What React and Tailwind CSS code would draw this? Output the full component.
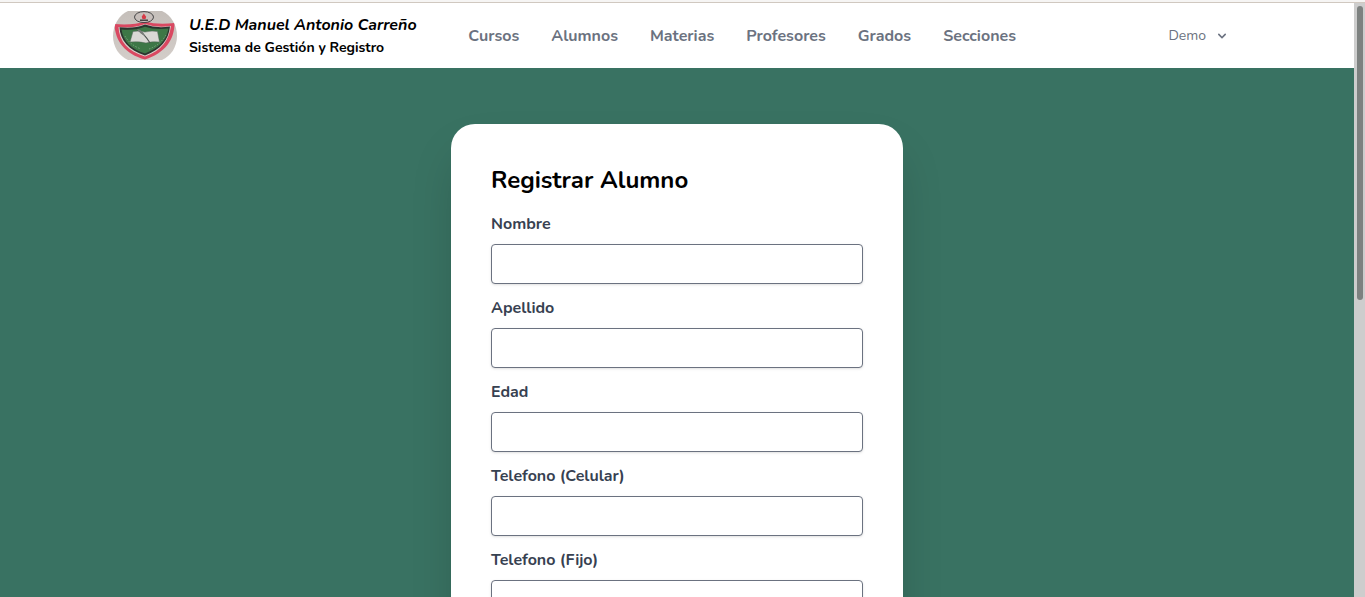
const links = ['Cursos', 'Alumnos', 'Materias', 'Profesores', 'Grados', 'Secciones'];

const fields = ['Nombre', 'Apellido', 'Edad', 'Telefono (Celular)', 'Telefono (Fijo)'];

function Crest() {
  return (
    <svg className="h-[49px] w-16 shrink-0" viewBox="0 0 64 49">
      <defs>
        <clipPath id="crest-clip">
          <path d="M15 0H49C58 4 64 14 64 25C64 36 58 45 49 49H15C6 45 0 36 0 25C0 14 6 4 15 0Z" />
        </clipPath>
        <linearGradient id="crest-paper" x1="0" y1="0" x2="0" y2="1">
          <stop offset="0" stopColor="#c5bfba" />
          <stop offset="1" stopColor="#d3cdc9" />
        </linearGradient>
      </defs>
      <g clipPath="url(#crest-clip)">
        <rect width="64" height="49" fill="url(#crest-paper)" />
        <path d="M1.500 13Q20 14.500 32 10.500Q44 14 61.500 12C61.500 29 52 42 32 48.500C12 43 2 30 1.500 13Z" fill="#d94861" />
        <path d="M5.500 16Q21 17.500 32 13Q43 17 58 15C56 29 49 39.500 32 45.500C15 40.500 6 30 5.500 16Z" fill="#d6cfc9" />
        <path d="M6.500 16.300Q21 18 32 13.500Q43 17.500 57 15.500C55.500 29 48 38.500 32 44.500C16 39.500 7 29 6.500 16.300Z" fill="#2b352f" />
        <path d="M8.500 18.500Q22 19.800 32 15.800Q42 19 55.500 17.500C53 30 46 37 32 42.500C18 38 10 30 8.500 18.500Z" fill="#3d7746" />
        <path d="M12 25Q17 34 28 38M53 24Q47 34 36 38" fill="none" stroke="#86a588" strokeWidth=".9" strokeDasharray="1.500 1.500" />
        <path d="M20 20.500Q26 19.500 32 21Q39 19.500 44.500 20.500L46.500 31Q39 30 33 32Q26 30 17 31Z" fill="#d9d8d4" stroke="#56665b" strokeWidth=".5" />
        <path d="M24 18.500Q31 22 37 32" fill="none" stroke="#4a504d" strokeWidth="1.100" />
        <path d="M24 18Q30 19 32 25Q27 23 24 18Z" fill="#777c78" />
        <ellipse cx="31" cy="6.100" rx="9.500" ry="5.500" fill="#c7bfbb" stroke="#37383a" strokeWidth=".9" />
        <path d="M30.800 2.500L33.200 5.800L32.500 8H29.500L28.700 5.800Z" fill="#d63b47" />
        <path d="M27 8.500H35V10H27Z" fill="#494143" />
      </g>
    </svg>
  );
}

export default function App() {
  return (
    <div className="flex h-[597px] w-[1365px] flex-col overflow-hidden bg-white font-[Nunito,Lato,sans-serif]">
      <div className="h-[3px] shrink-0 border-b border-[#d0c8c0] bg-[#f6f5f4]" />
      <div className="flex min-h-0 flex-1">
        <div className="flex w-[1354px] flex-col overflow-hidden bg-[#397262]">
          <header className="flex h-[65px] shrink-0 items-center bg-white pl-[113px]">
            <Crest />
            <div className="ml-3 w-[279.3px] pb-px whitespace-nowrap text-black">
              <p className="text-base leading-6 font-bold italic">U.E.D Manuel Antonio Carreño</p>
              <p className="text-sm leading-[21px] font-bold">Sistema de Gestión y Registro</p>
            </div>
            <nav className="flex gap-8 text-base font-bold text-[#6b7280]">
              {links.map((link) => (
                <a key={link} className="whitespace-nowrap">{link}</a>
              ))}
            </nav>
            <button className="ml-auto flex items-center pr-[124px] text-sm text-[#6b7280]">
              <span>Demo</span>
              <svg className="ml-2 size-4" viewBox="0 0 20 20" fill="currentColor">
                <path fillRule="evenodd" d="M5.293 7.293a1 1 0 011.414 0L10 10.586l3.293-3.293a1 1 0 111.414 1.414l-4 4a1 1 0 01-1.414 0l-4-4a1 1 0 010-1.414z" clipRule="evenodd" />
              </svg>
            </button>
          </header>
          <main className="flex min-h-0 flex-1 items-start justify-center pt-14">
            <form className="h-[720px] w-[452px] shrink-0 rounded-3xl bg-white p-10 shadow-[0_25px_50px_-12px_rgb(0_0_0/0.22)]">
              <h1 className="text-2xl leading-8 font-bold text-black">Registrar Alumno</h1>
              <div className="mt-4 flex flex-col gap-3">
                {fields.map((field) => (
                  <label key={field} className="block text-base leading-6 font-bold text-[#374151]">
                    <span className="block">{field}</span>
                    <input className="mt-2 block h-10 w-full rounded border border-[#6b7280] bg-white px-3 shadow-sm outline-none" />
                  </label>
                ))}
              </div>
            </form>
          </main>
        </div>
        <div className="w-[11px] bg-[#cdcdcd] pt-[3px] pl-[3px]">
          <div className="h-[294px] w-1.5 rounded-full bg-[#7d8180]" />
        </div>
      </div>
    </div>
  );
}
